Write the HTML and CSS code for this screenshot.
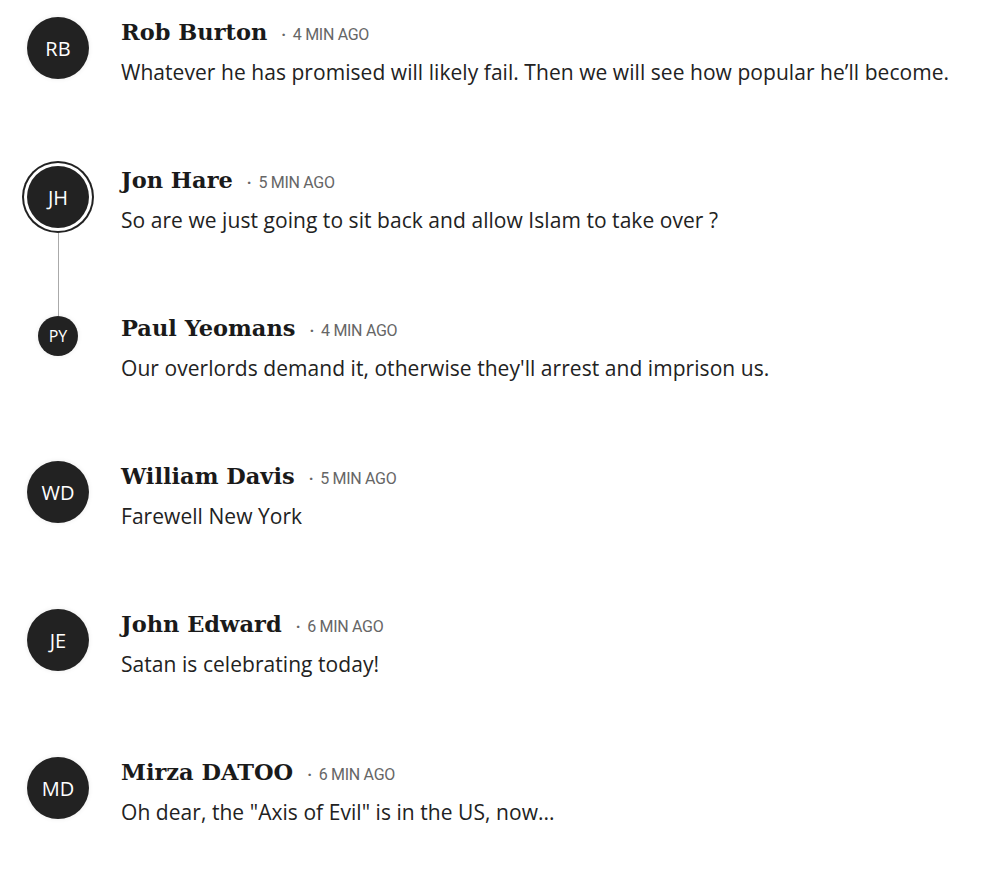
FILE: index.html
```html
<!DOCTYPE html>
<html lang="en">

<head>
    <meta charset="UTF-8">
    <meta name="viewport" content="width=device-width, initial-scale=1.0">
    <title>Comments</title>
    <link rel="stylesheet" href="styles.css">
</head>

<body>
    <div class="comments">
        <div class="comment">
            <div class="avatar-col">
                <div class="avatar">RB</div>
            </div>
            <div class="comment-body">
                <div class="comment-head">
                    <span class="author">Rob Burton</span>
                    <span class="time">4 MIN AGO</span>
                </div>
                <p class="text">Whatever he has promised will likely fail. Then we will see how popular he’ll become.</p>
            </div>
        </div>

        <div class="comment">
            <div class="avatar-col">
                <div class="avatar ringed">JH</div>
                <div class="thread-line"></div>
            </div>
            <div class="comment-body">
                <div class="comment-head">
                    <span class="author">Jon Hare</span>
                    <span class="time">5 MIN AGO</span>
                </div>
                <p class="text">So are we just going to sit back and allow Islam to take over ?</p>
            </div>
        </div>

        <div class="comment reply">
            <div class="avatar-col">
                <div class="avatar small">PY</div>
            </div>
            <div class="comment-body">
                <div class="comment-head">
                    <span class="author">Paul Yeomans</span>
                    <span class="time">4 MIN AGO</span>
                </div>
                <p class="text">Our overlords demand it, otherwise they'll arrest and imprison us.</p>
            </div>
        </div>

        <div class="comment">
            <div class="avatar-col">
                <div class="avatar">WD</div>
            </div>
            <div class="comment-body">
                <div class="comment-head">
                    <span class="author">William Davis</span>
                    <span class="time">5 MIN AGO</span>
                </div>
                <p class="text">Farewell New York</p>
            </div>
        </div>

        <div class="comment">
            <div class="avatar-col">
                <div class="avatar">JE</div>
            </div>
            <div class="comment-body">
                <div class="comment-head">
                    <span class="author">John Edward</span>
                    <span class="time">6 MIN AGO</span>
                </div>
                <p class="text">Satan is celebrating today!</p>
            </div>
        </div>

        <div class="comment">
            <div class="avatar-col">
                <div class="avatar">MD</div>
            </div>
            <div class="comment-body">
                <div class="comment-head">
                    <span class="author">Mirza DATOO</span>
                    <span class="time">6 MIN AGO</span>
                </div>
                <p class="text">Oh dear, the "Axis of Evil" is in the US, now...</p>
            </div>
        </div>
    </div>
</body>

</html>
```

FILE: styles.css
```css
body {
    margin: 0;
    background-color: #fff;
    font-family: 'Open Sans', Lato, sans-serif;
    color: #222;
}

.comments {
    padding-top: 17px;
}

.comment {
    display: flex;
    padding-left: 27px;
}

.avatar-col {
    width: 62px;
    display: flex;
    flex-direction: column;
    align-items: center;
    flex-shrink: 0;
}

.avatar {
    width: 62px;
    height: 62px;
    border-radius: 50%;
    background-color: #222;
    color: #fff;
    font-family: 'Open Sans', sans-serif;
    font-weight: 500;
    font-size: 20px;
    display: flex;
    align-items: center;
    justify-content: center;
    box-shadow: 0 0 5px rgba(0, 0, 0, 0.08);
}

.avatar.ringed {
    margin-top: 1px;
    box-shadow: 0 0 0 3px #fff, 0 0 0 5px #222;
}

.avatar.small {
    width: 40px;
    height: 40px;
    margin-top: 3px;
    font-size: 16px;
}

.thread-line {
    flex: 1;
    width: 1px;
    margin-top: 5px;
    margin-bottom: -3px;
    background-color: #aaa;
}

.comment-body {
    margin-left: 32px;
    padding-bottom: 78px;
}

.comment-head {
    display: flex;
    align-items: baseline;
    height: 30px;
    line-height: 30px;
}

.author {
    font-family: 'DejaVu Serif', serif;
    font-weight: bold;
    font-size: 22.5px;
    color: #1a1a1a;
}

.time {
    font-family: Roboto, sans-serif;
    font-size: 16px;
    color: #666;
    margin-left: 14px;
    letter-spacing: -0.3px;
}

.time::before {
    content: "·";
    font-weight: bold;
    margin-right: 7px;
}

.text {
    margin: 10px 0 0;
    font-size: 21px;
    line-height: 30px;
    letter-spacing: 0.05px;
}
```
